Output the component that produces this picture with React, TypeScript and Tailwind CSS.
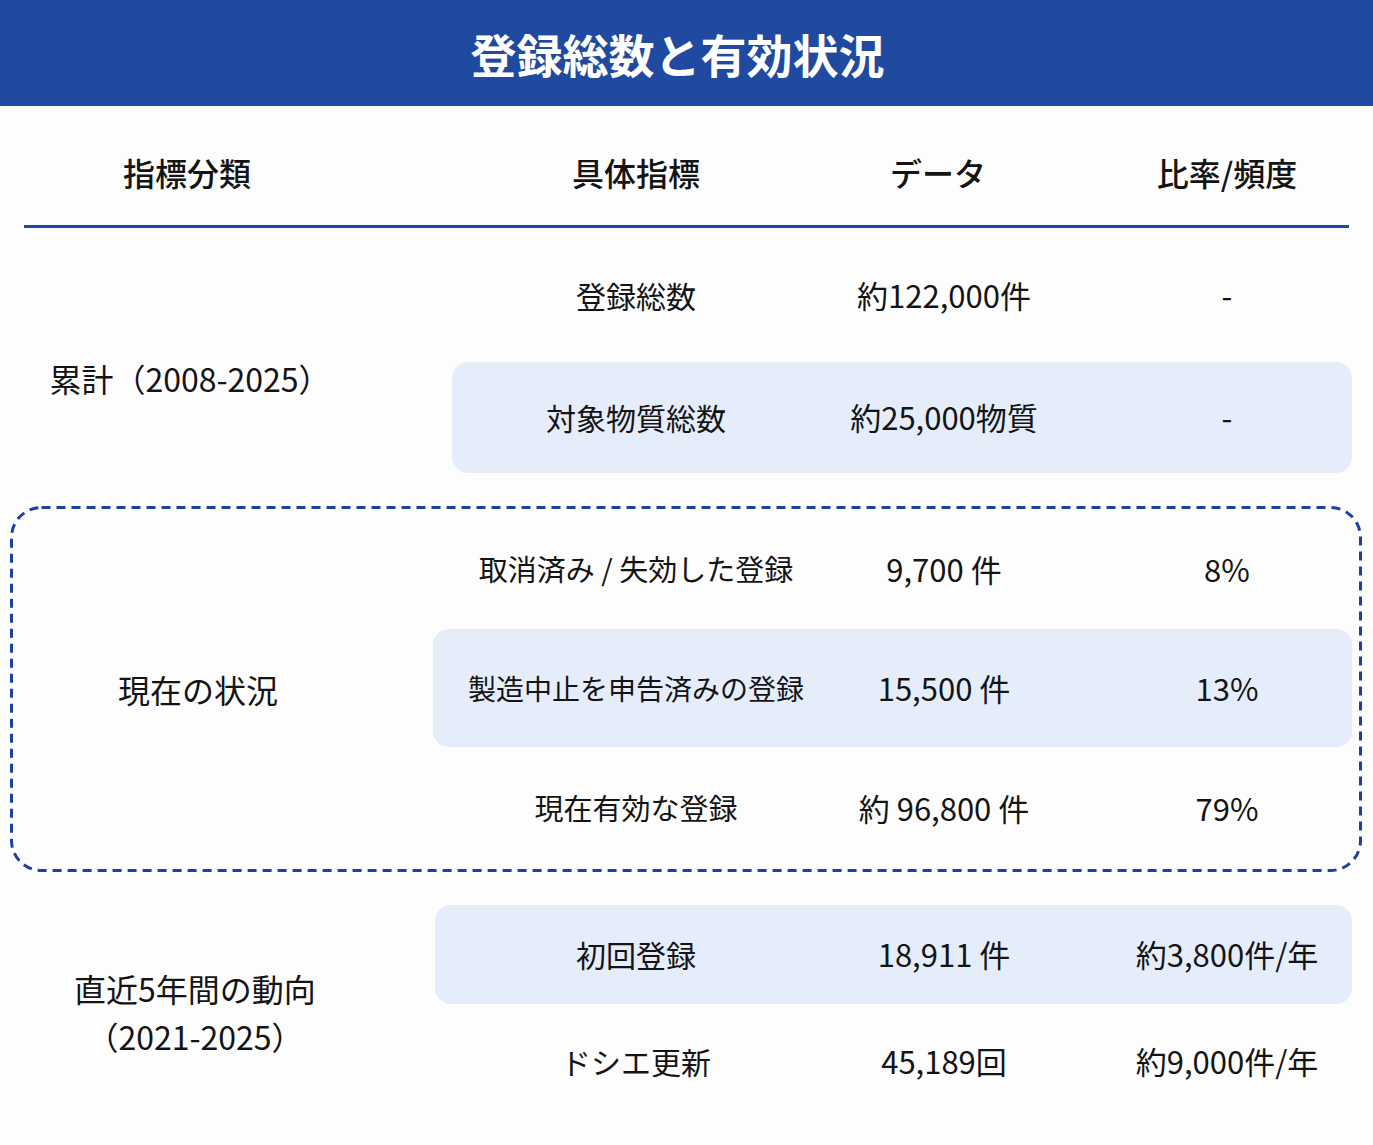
import React from "react";

type Row = { name: string; data: string; ratio: string; hl?: boolean; h: string; nameCls?: string };

const RowLine: React.FC<{ row: Row; pl: string }> = ({ row, pl }) => {
  return (
    <div
      className={`grid grid-cols-[300px_300px_250px] gap-x-[8px] items-center text-[30px] text-[#141414] ${row.h} ${pl} ${
        row.hl ? "bg-[#e5edfb] rounded-2xl" : ""
      }`}
    >
      <div className={`flex justify-center whitespace-nowrap ${row.nameCls ?? ""}`}>{row.name}</div>
      <div className="flex justify-center whitespace-nowrap text-[31px]">{row.data}</div>
      <div className="flex justify-center whitespace-nowrap text-[31px]">{row.ratio}</div>
    </div>
  );
};

const App: React.FC = () => {
  const total: Row[] = [
    { name: "登録総数", data: "約122,000件", ratio: "-", h: "h-[134px]" },
    { name: "対象物質総数", data: "約25,000物質", ratio: "-", h: "h-[111px]", hl: true },
  ];
  const current: Row[] = [
    { name: "取消済み / 失効した登録", data: "9,700 件", ratio: "8%", h: "h-[120px]", nameCls: "text-[29px]" },
    { name: "製造中止を申告済みの登録", data: "15,500 件", ratio: "13%", h: "h-[118px]", hl: true, nameCls: "text-[28px]" },
    { name: "現在有効な登録", data: "約 96,800 件", ratio: "79%", h: "h-[122px]", nameCls: "text-[29px]" },
  ];
  const recent: Row[] = [
    { name: "初回登録", data: "18,911 件", ratio: "約3,800件/年", h: "h-[99px]", hl: true },
    { name: "ドシエ更新", data: "45,189回", ratio: "約9,000件/年", h: "h-[114px]" },
  ];

  return (
    <div className="w-[1373px] min-h-[1145px] bg-[#fdfdfd] font-['Noto_Sans_CJK_JP',sans-serif] text-[#141414]">
      <header className="h-[106px] bg-[#1f4a9f] flex items-center justify-center pr-[18px]">
        <h1 className="text-[46px] font-bold text-white">登録総数と有効状況</h1>
      </header>

      {/* column titles */}
      <div className="h-[119px] pt-[12px] flex items-center text-[32px] font-medium">
        <div className="w-[374px] text-center">指標分類</div>
        <div className="ml-[60px] pl-[52px] grid grid-cols-[300px_300px_250px] gap-x-[8px] text-center">
          <span>具体指標</span>
          <span className="pr-[12px]">データ</span>
          <span>比率/頻度</span>
        </div>
      </div>
      <div className="mx-[24px] h-[3px] bg-[#1f47a6]" />

      {/* 累計 */}
      <section className="flex">
        <div className="w-[380px] pt-[54px] flex items-center justify-center text-[32px] whitespace-nowrap">
          累計（2008-2025）
        </div>
        <div className="ml-[72px] w-[900px] flex flex-col">
          {total.map((r) => (
            <RowLine key={r.name} row={r} pl="pl-[34px]" />
          ))}
        </div>
      </section>

      {/* 現在の状況 */}
      <section className="relative mt-[33px] mx-[10px] h-[366px] flex">
        <svg className="absolute inset-0 pointer-events-none" width="1352" height="366">
          <rect
            x="1.5"
            y="1.5"
            width="1349"
            height="363"
            rx="30"
            fill="none"
            stroke="#1d3fa6"
            strokeWidth="3"
            strokeDasharray="9 6"
          />
        </svg>
        <div className="ml-[3px] w-[370px] flex items-center justify-center text-[32px]">現在の状況</div>
        <div className="ml-[50px] w-[919px] pt-[3px] flex flex-col">
          {current.map((r) => (
            <RowLine key={r.name} row={r} pl="pl-[53px]" />
          ))}
        </div>
      </section>

      {/* 直近5年間 */}
      <section className="mt-[33px] flex pb-[27px]">
        <div className="w-[390px] flex flex-col items-center justify-center text-[32px] leading-[48px]">
          <span>直近5年間の動向</span>
          <span>（2021-2025）</span>
        </div>
        <div className="ml-[45px] w-[917px] flex flex-col">
          {recent.map((r) => (
            <RowLine key={r.name} row={r} pl="pl-[51px]" />
          ))}
        </div>
      </section>
    </div>
  );
};

export default App;
